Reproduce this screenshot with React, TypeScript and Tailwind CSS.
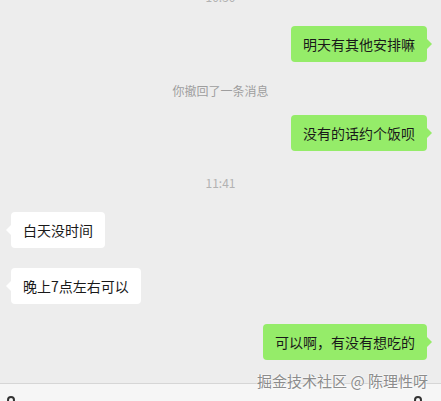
import React from "react";

const font = { fontFamily: '"Noto Sans CJK SC", "Liberation Sans", sans-serif' };

function Right({ text }: { text: string }) {
  return (
    <div className="flex justify-end pr-[14px]">
      <div className="relative h-[36px] px-3 flex items-center rounded-[4px] bg-[#95ec69] text-[14px] text-[#191919] leading-none">
        {text}
        <span className="absolute right-[-5px] top-[13px] w-0 h-0 border-y-[5px] border-y-transparent border-l-[5px] border-l-[#95ec69]" />
      </div>
    </div>
  );
}

function Left({ text }: { text: string }) {
  return (
    <div className="flex justify-start pl-[11px]">
      <div className="relative h-[36px] px-3 flex items-center rounded-[4px] bg-white text-[14px] text-[#191919] leading-none">
        {text}
        <span className="absolute left-[-5px] top-[13px] w-0 h-0 border-y-[5px] border-y-transparent border-r-[5px] border-r-white" />
      </div>
    </div>
  );
}

export default function App() {
  return (
    <div className="relative w-[441px] h-[401px] overflow-hidden bg-[#ededed]" style={font}>
      <div className="flex flex-col">
        <div className="mt-[-10px] h-[14px] flex justify-center text-[12px] leading-[14px] text-[#b2b2b2]">10:50</div>
        <div className="mt-[22px]"><Right text="明天有其他安排嘛" /></div>
        <div className="mt-[21px] h-[16px] flex justify-center items-center text-[12px] text-[#9e9e9e]">你撤回了一条消息</div>
        <div className="mt-[16px]"><Right text="没有的话约个饭呗" /></div>
        <div className="mt-[24px] h-[16px] flex justify-center items-center text-[12px] text-[#b2b2b2]">11:41</div>
        <div className="mt-[21px]"><Left text="白天没时间" /></div>
        <div className="mt-[20px]"><Left text="晚上7点左右可以" /></div>
        <div className="mt-[20px]"><Right text="可以啊，有没有想吃的" /></div>
        <div className="mt-[23px] h-px bg-[#d6d6d6]" />
        <div className="h-[20px] bg-[#f6f6f6] relative">
          <span className="absolute left-[7px] top-[12px] w-[8px] h-[8px] rounded-full border-[2px] border-[#333]" />
          <span className="absolute left-[414px] top-[12px] w-[8px] h-[8px] rounded-full border-[2px] border-[#333]" />
        </div>
      </div>
      <div
        className="absolute right-[13px] top-[370px] text-[15px] leading-[22px] text-[#8c8c8c] whitespace-nowrap"
        style={{ textShadow: "0 0 2px #fff, 0 0 2px #fff" }}
      >
        掘金技术社区 @ 陈理性呀
      </div>
    </div>
  );
}
